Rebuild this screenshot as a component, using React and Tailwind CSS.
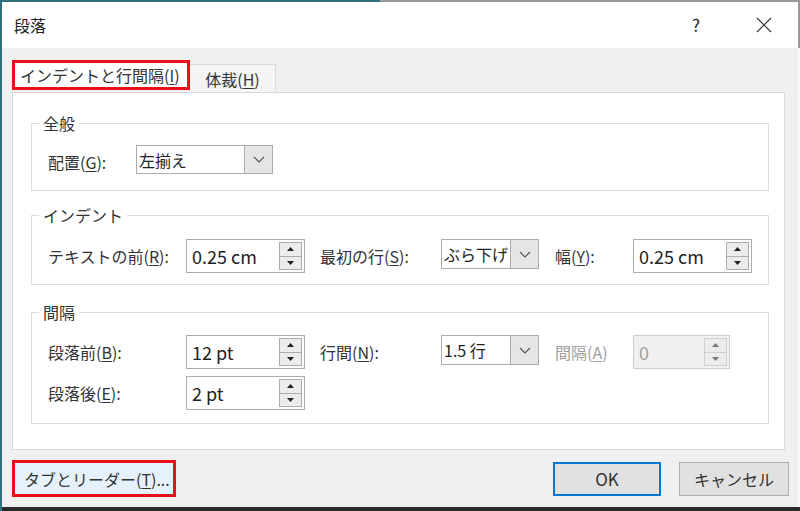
import { useState } from "react";

const font = { fontFamily: '"Noto Sans CJK JP", "Noto Sans", sans-serif' };

const Key = ({ children }) => <span className="underline underline-offset-2">{children}</span>;

const SpinBox = ({ value, width = "w-[119px]", disabled = false }) => (
  <div
    className={`flex items-center h-[34px] ${width} border ${
      disabled ? "border-[#cccccc] bg-[#f0f0f0] text-[#a0a0a0]" : "border-[#abadb3] bg-white text-[#222]"
    }`}
  >
    <span className="flex-1 pl-[5px] text-[18px] leading-none">{value}</span>
    <div className="flex flex-col w-[23px] h-[28px] mr-[2px]">
      <div className={`flex-1 flex items-center justify-center border ${disabled ? "border-[#d0d0d0] bg-[#ececec]" : "border-[#adadad] bg-[#ececec]"}`}>
        <svg width="7" height="4" viewBox="0 0 7 4">
          <path d="M0 4 L3.5 0 L7 4 Z" fill={disabled ? "#777" : "#222"} />
        </svg>
      </div>
      <div className={`flex-1 flex items-center justify-center border border-t-0 ${disabled ? "border-[#d0d0d0] bg-[#ececec]" : "border-[#adadad] bg-[#ececec]"}`}>
        <svg width="7" height="4" viewBox="0 0 7 4">
          <path d="M0 0 L7 0 L3.5 4 Z" fill={disabled ? "#777" : "#222"} />
        </svg>
      </div>
    </div>
  </div>
);

const Select = ({ value, width = "w-[98px]", height = "h-[30px]" }) => (
  <div className={`flex ${width} ${height} border border-[#adadad] bg-white self-start`}>
    <span className="flex-1 flex items-center pl-[2px] text-[16px] text-[#222] whitespace-nowrap">{value}</span>
    <div className="w-[28px] flex items-center justify-center bg-[#e5e5e5] border-l border-[#adadad]">
      <svg width="12" height="7" viewBox="0 0 12 7">
        <path d="M1 1 L6 6 L11 1" fill="none" stroke="#555" strokeWidth="1.2" />
      </svg>
    </div>
  </div>
);

const Label = ({ children, width, gray = false, className = "" }) => (
  <div className={`${width} h-[34px] flex items-center text-[16px] whitespace-nowrap ${gray ? "text-[#a0a0a0]" : "text-[#333]"} ${className}`}>
    {children}
  </div>
);

const Group = ({ title, children, className = "" }) => (
  <fieldset className={`w-[738px] border border-[#dcdcdc] pl-[7px] ${className}`}>
    <legend className="px-1 text-[16px] leading-[20px] text-[#333]">{title}</legend>
    <div className="pl-[9px]">{children}</div>
  </fieldset>
);

export default function App() {
  const [tab, setTab] = useState("indent");

  return (
    <div className="w-[800px] h-[511px] overflow-hidden flex flex-col bg-[#f0f0f0] border-l-2 border-[#2f6f80]" style={font}>
      {/* window top edge */}
      <div className="h-[2px] flex">
        <div className="w-[378px] bg-[#2f6f80]" />
        <div className="flex-1 bg-[#9a9a9a]" />
      </div>

      {/* Title bar */}
      <div className="h-[46px] bg-white flex items-center pl-[12px] border-r-2 border-[#9a9a9a]">
        <span className="text-[16px] text-[#222]">段落</span>
        <span className="ml-auto text-[17px] text-[#222] mr-[56px]">?</span>
        <svg width="16" height="16" viewBox="0 0 16 16" className="mr-[26px]">
          <path d="M1 1 L15 15 M15 1 L1 15" stroke="#333" strokeWidth="1.2" />
        </svg>
      </div>

      {/* Body */}
      <div className="flex-1 flex flex-col pl-[10px] pt-[12px] border-r-2 border-[#fafafa]">
        {/* Tabs */}
        <div className="flex items-end h-[32px]">
          <button
            onClick={() => setTab("indent")}
            className="h-[30px] mb-[2px] w-[178px] bg-white border-[3px] border-[#e8101a] flex items-center pl-[5px] text-[16px] text-[#333] whitespace-nowrap"
          >
            インデントと行間隔(<Key>I</Key>)
          </button>
          <button
            onClick={() => setTab("layout")}
            className="h-[28px] w-[86px] bg-[#f4f4f4] border border-l-0 border-b-0 border-[#d9d9d9] flex items-center justify-center text-[16px] text-[#333]"
          >
            体裁(<Key>H</Key>)
          </button>
        </div>

        {/* Panel */}
        <div className="w-[773px] h-[358px] bg-white border border-[#d9d9d9] pl-[18px] pt-[20px]">
          <Group title="全般" className="pb-[11px]">
            <div className="flex items-center pt-[12px]">
              <Label width="w-[88px]">配置(<Key>G</Key>):</Label>
              <Select value="左揃え" width="w-[137px]" height="h-[29px]" />
            </div>
          </Group>

          <Group title="インデント" className="mt-[14px] pb-[11px]">
            <div className="flex items-start pt-[14px]">
              <Label width="w-[138px]">テキストの前(<Key>R</Key>):</Label>
              <SpinBox value="0.25 cm" />
              <Label width="w-[121px]" className="ml-[15px]">最初の行(<Key>S</Key>):</Label>
              <Select value="ぶら下げ" />
              <Label width="w-[78px]" className="ml-[16px]">幅(<Key>Y</Key>):</Label>
              <SpinBox value="0.25 cm" />
            </div>
          </Group>

          <Group title="間隔" className="mt-[17px] pb-[13px]">
            <div className="flex items-start pt-[13px]">
              <Label width="w-[138px]">段落前(<Key>B</Key>):</Label>
              <SpinBox value="12 pt" />
              <Label width="w-[121px]" className="ml-[15px]">行間(<Key>N</Key>):</Label>
              <Select value="1.5 行" />
              <Label width="w-[78px]" gray className="ml-[16px]">間隔(<Key>A</Key>)</Label>
              <SpinBox value="0" width="w-[97px]" disabled />
            </div>
            <div className="flex items-start mt-[7px]">
              <Label width="w-[138px]">段落後(<Key>E</Key>):</Label>
              <SpinBox value="2 pt" />
            </div>
          </Group>
        </div>

        {/* Buttons */}
        <div className="flex items-center mt-[10px]">
          <button className="h-[37px] w-[164px] border-[3px] border-[#e8101a] bg-[#e5f1fb] flex items-center pl-[9px] text-[16px] text-[#333] whitespace-nowrap">
            タブとリーダー(<Key>T</Key>)...
          </button>
          <button className="ml-auto h-[34px] w-[108px] border-2 border-[#0078d7] bg-[#e1e1e1] text-[17px] text-[#333]">
            OK
          </button>
          <button className="ml-[18px] mr-[9px] h-[34px] w-[110px] border border-[#adadad] bg-[#e1e1e1] text-[16px] text-[#333]">
            キャンセル
          </button>
        </div>
      </div>

      {/* window bottom edge */}
      <div className="h-[4px] bg-[#2a2a2a]" />
    </div>
  );
}
